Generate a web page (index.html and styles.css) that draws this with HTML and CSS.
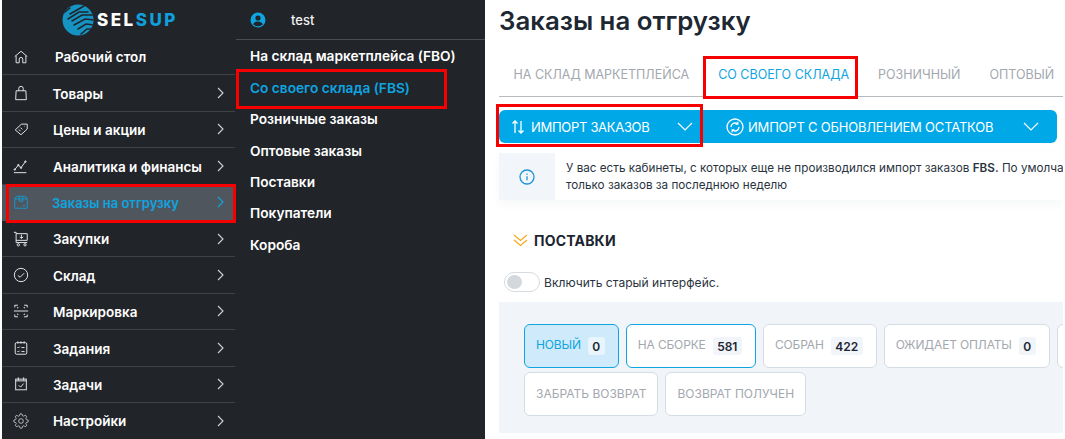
FILE: index.html
```html
<!DOCTYPE html>
<html lang="ru">
<head>
<meta charset="utf-8">
<title>Заказы на отгрузку</title>
<link rel="stylesheet" href="styles.css">
</head>
<body>
<div class="page">
  <nav class="sidebar">
    <div class="logo">
      <svg class="logo-globe" viewBox="0 0 32 34" width="32" height="34">
        <defs><clipPath id="gl"><circle cx="16" cy="17" r="15.5"/></clipPath></defs>
        <circle cx="16" cy="17" r="15.5" fill="#1594c4"/>
        <g clip-path="url(#gl)" fill="none" stroke="#212429" stroke-width="1.5" stroke-linecap="round">
          <path d="M8 11 L22 3"/><path d="M6 16 L17 9 L26 9"/><path d="M10 18 L20 12 L31 12"/><path d="M12 22 L23 16 L32 17"/><path d="M16 26 L24 21 L32 22"/><path d="M19 31 L25 26 L32 26"/><path d="M-1 12 L8 5"/>
        </g>
      </svg>
      <span class="logo-text">SEL<span class="logo-accent">SUP</span></span>
    </div>
    <ul class="menu">
      <li class="menu-item">
        <svg class="ic" viewBox="0 0 18 18"><path d="M2 8.500 9 2.500l7 6M3.500 7.500V15.500h3.500v-4a2 2 0 0 1 4 0v4h3.500V7.500"/></svg>
        <span class="menu-label label-home label-flat">Рабочий стол</span>
      </li>
      <li class="menu-item">
        <svg class="ic" viewBox="0 0 18 18"><path d="M3.500 6.500h11l.5 10H3zM6.500 6.500V4a2.500 2.500 0 0 1 5 0v2.500"/></svg>
        <span class="menu-label label-goods">Товары</span>
        <svg class="chev" viewBox="0 0 7 12"><path d="M1 1l5 5-5 5"/></svg>
      </li>
      <li class="menu-item">
        <svg class="ic" viewBox="0 0 18 18"><path d="M9.500 3.500H16V9l-7 6.500L2.500 10zM13 6h.5M6.500 9.500l2 2M8.500 7.500l2 2"/></svg>
        <span class="menu-label">Цены и акции</span>
        <svg class="chev" viewBox="0 0 7 12"><path d="M1 1l5 5-5 5"/></svg>
      </li>
      <li class="menu-item">
        <svg class="ic" viewBox="0 0 18 18"><path d="M1 16.500h14M2 13l4-5 3 3 5-7"/><circle cx="2" cy="13" r=".8"/><circle cx="6" cy="8" r=".8"/><circle cx="9" cy="11" r=".8"/><circle cx="14" cy="4" r=".8"/></svg>
        <span class="menu-label label-low">Аналитика и финансы</span>
        <svg class="chev" viewBox="0 0 7 12"><path d="M1 1l5 5-5 5"/></svg>
      </li>
      <li class="menu-item is-active">
        <svg class="ic" viewBox="0 0 18 18"><path d="M4 2.500h10l2 3v10.500H2V5.500zM2 5.500h14M7 2.500v6M11 2.500v6M7 8h4M11 13h2.500"/></svg>
        <span class="menu-label">Заказы на отгрузку</span>
        <svg class="chev" viewBox="0 0 7 12"><path d="M1 1l5 5-5 5"/></svg>
      </li>
      <li class="menu-item">
        <svg class="ic" viewBox="0 0 18 18"><path d="M1 1.500h2.500V13H16M3.500 3h12.500v7.500H3.500M9.500 4v4M7.500 6.500l2 2 2-2"/><circle cx="6" cy="15.500" r="1.300"/><circle cx="13.500" cy="15.500" r="1.300"/></svg>
        <span class="menu-label label-flat">Закупки</span>
        <svg class="chev" viewBox="0 0 7 12"><path d="M1 1l5 5-5 5"/></svg>
      </li>
      <li class="menu-item">
        <svg class="ic" viewBox="0 0 18 18"><circle cx="9" cy="9" r="7.500"/><path d="M5.500 9.500l2.500 2 4.500-4.500"/></svg>
        <span class="menu-label">Склад</span>
        <svg class="chev" viewBox="0 0 7 12"><path d="M1 1l5 5-5 5"/></svg>
      </li>
      <li class="menu-item">
        <svg class="ic" viewBox="0 0 18 18"><path d="M2 5V2.500h3.500M12.500 2.500H16V5M2 13v2.500h3.500M12.500 15.500H16V13M1 9h16M5 6V5h1M12 5h1v1M5 12v1h1M13 12v1h-1"/></svg>
        <span class="menu-label">Маркировка</span>
        <svg class="chev" viewBox="0 0 7 12"><path d="M1 1l5 5-5 5"/></svg>
      </li>
      <li class="menu-item">
        <svg class="ic" viewBox="0 0 18 18"><rect x="2.500" y="3" width="13" height="13" rx="1.500"/><path d="M5.500 1.500V4M9 1.500V4M12.500 1.500V4M5 8l1 1 1.500-1.500M9.500 8.500H13M5 12.500l1 1 1.500-1.500M9.500 13H13"/></svg>
        <span class="menu-label label-low">Задания</span>
        <svg class="chev" viewBox="0 0 7 12"><path d="M1 1l5 5-5 5"/></svg>
      </li>
      <li class="menu-item">
        <svg class="ic" viewBox="0 0 18 18"><rect x="3" y="3.500" width="12" height="12"/><path d="M6 1.500V5M12 1.500V5M3 5.500h12M6.500 10.500l2 2 3.500-4"/></svg>
        <span class="menu-label">Задачи</span>
        <svg class="chev" viewBox="0 0 7 12"><path d="M1 1l5 5-5 5"/></svg>
      </li>
      <li class="menu-item">
        <svg class="ic" viewBox="0 0 24 24"><circle cx="12" cy="12" r="3.500"/><path d="M19.400 15a1.650 1.650 0 0 0 .33 1.820l.06.06a2 2 0 0 1 0 2.830 2 2 0 0 1-2.830 0l-.06-.06a1.650 1.650 0 0 0-1.820-.33 1.650 1.650 0 0 0-1 1.510V21a2 2 0 0 1-2 2 2 2 0 0 1-2-2v-.09A1.650 1.650 0 0 0 9 19.400a1.650 1.650 0 0 0-1.820.33l-.06.06a2 2 0 0 1-2.830 0 2 2 0 0 1 0-2.830l.06-.06a1.650 1.650 0 0 0 .33-1.820 1.650 1.650 0 0 0-1.510-1H3a2 2 0 0 1-2-2 2 2 0 0 1 2-2h.09A1.650 1.650 0 0 0 4.600 9a1.650 1.650 0 0 0-.33-1.820l-.06-.06a2 2 0 0 1 0-2.830 2 2 0 0 1 2.830 0l.06.06a1.650 1.650 0 0 0 1.820.33H9a1.650 1.650 0 0 0 1-1.510V3a2 2 0 0 1 2-2 2 2 0 0 1 2 2v.09a1.650 1.650 0 0 0 1 1.510 1.650 1.650 0 0 0 1.820-.33l.06-.06a2 2 0 0 1 2.830 0 2 2 0 0 1 0 2.830l-.06.06a1.650 1.650 0 0 0-.33 1.820V9a1.650 1.650 0 0 0 1.510 1H21a2 2 0 0 1 2 2 2 2 0 0 1-2 2h-.09a1.650 1.650 0 0 0-1.510 1z"/></svg>
        <span class="menu-label label-flat">Настройки</span>
        <svg class="chev" viewBox="0 0 7 12"><path d="M1 1l5 5-5 5"/></svg>
      </li>
    </ul>
  </nav>

  <aside class="subnav">
    <div class="user">
      <svg class="user-icon" viewBox="0 0 16 16" width="16" height="16"><circle cx="8" cy="8" r="7.500" fill="#0ea5e0"/><circle cx="8" cy="6" r="2.600" fill="#212429"/><path d="M3.200 12.300c.8-2 2.800-2.800 4.800-2.800s4 .8 4.800 2.800A6.300 6.300 0 0 1 8 14.300a6.300 6.300 0 0 1-4.800-2z" fill="#212429"/></svg>
      <span class="user-name">test</span>
    </div>
    <ul class="sublist">
      <li class="subitem">На склад маркетплейса (FBO)</li>
      <li class="subitem is-current">Со своего склада (FBS)</li>
      <li class="subitem">Розничные заказы</li>
      <li class="subitem">Оптовые заказы</li>
      <li class="subitem">Поставки</li>
      <li class="subitem">Покупатели</li>
      <li class="subitem">Короба</li>
    </ul>
  </aside>

  <main class="content">
    <h1 class="title">Заказы на отгрузку</h1>
    <div class="tabs">
      <span class="tab">НА СКЛАД МАРКЕТПЛЕЙСА</span>
      <span class="tab is-selected">СО СВОЕГО СКЛАДА</span>
      <span class="tab">РОЗНИЧНЫЙ</span>
      <span class="tab">ОПТОВЫЙ</span>
    </div>
    <div class="actions">
      <div class="action action-import">
        <svg class="action-icon" viewBox="0 0 14 16" width="14" height="16"><path d="M4 14V2M1.500 4.500 4 2l2.500 2.500M10 2v12M7.500 11.500 10 14l2.500-2.500"/></svg>
        <span class="action-label">ИМПОРТ ЗАКАЗОВ</span>
        <svg class="action-chev" viewBox="0 0 16 9" width="16" height="9"><path d="M1 1l7 7 7-7"/></svg>
      </div>
      <div class="action action-sync">
        <svg class="action-icon" viewBox="0 0 18 18" width="18" height="18"><circle cx="9" cy="9" r="8"/><path d="M5 9a4 4 0 0 1 6.500-3.100M13 9a4 4 0 0 1-6.500 3.100M11.800 3.800v2.400H9.500M6.200 14.200v-2.400h2.300"/></svg>
        <span class="action-label">ИМПОРТ С ОБНОВЛЕНИЕМ ОСТАТКОВ</span>
        <svg class="action-chev" viewBox="0 0 16 9" width="16" height="9"><path d="M1 1l7 7 7-7"/></svg>
      </div>
    </div>
    <div class="notice">
      <div class="notice-icon">
        <svg viewBox="0 0 16 16" width="16" height="16"><circle cx="8" cy="8" r="7"/><path d="M8 7.200v4M8 4.500v1.200"/></svg>
      </div>
      <p class="notice-text">У вас есть кабинеты, с которых еще не производился импорт заказов <b>FBS.</b> По умолчанию будет выполнен импорт<br>только заказов за последнюю неделю</p>
    </div>
    <div class="section-head">
      <svg viewBox="0 0 15 14" width="15" height="14"><path d="M1 2l6.500 5.500L14 2M1 7l6.500 5.500L14 7"/></svg>
      <span class="section-title">ПОСТАВКИ</span>
    </div>
    <div class="switch-row">
      <span class="switch"><span class="switch-knob"></span></span>
      <span class="switch-label">Включить старый интерфейс.</span>
    </div>
    <div class="panel">
      <div class="chips">
        <span class="chip chip-new">НОВЫЙ<span class="count count-new">0</span></span>
        <span class="chip chip-on">НА СБОРКЕ<span class="count">581</span></span>
        <span class="chip">СОБРАН<span class="count">422</span></span>
        <span class="chip">ОЖИДАЕТ ОПЛАТЫ<span class="count">0</span></span>
        <span class="chip chip-cut"></span>
      </div>
      <div class="chips">
        <span class="chip chip-plain">ЗАБРАТЬ ВОЗВРАТ</span>
        <span class="chip chip-plain">ВОЗВРАТ ПОЛУЧЕН</span>
      </div>
    </div>
  </main>

  <div class="mark mark-nav"></div>
  <div class="mark mark-sub"></div>
  <div class="mark mark-tab"></div>
  <div class="mark mark-btn"></div>
</div>
</body>
</html>
```

FILE: styles.css
```css
* { box-sizing: border-box; }
html, body { margin: 0; padding: 0; background: #fff; }
ul { list-style: none; margin: 0; padding: 0; }
.page {
  position: relative;
  display: flex;
  width: 1065px;
  height: 439px;
  overflow: hidden;
  padding-left: 2px;
  font-family: Inter, "Liberation Sans", sans-serif;
  background: #fff;
}
.sidebar { width: 233px; flex: none; background: #212429; color: #fff; }
.logo { height: 39px; display: flex; align-items: center; padding-left: 60px; gap: 3px; }
.logo-globe { flex: none; }
.logo-text { font-weight: 800; font-size: 17px; letter-spacing: 2.500px; color: #fff; }
.logo-accent { color: #0f9fdc; }
.menu-item {
  height: 36.4px;
  display: flex;
  align-items: center;
  padding-left: 11px;
  border-bottom: 1px solid #3f4247;
}
.menu-item:last-child { border-bottom: 0; }
.ic {
  width: 16px;
  height: 16px;
  flex: none;
  fill: none;
  stroke: #e4e6e8;
  stroke-width: 1.100;
}
.menu-label { margin-left: 24px; padding-top: 1px; font-size: 13.500px; font-weight: 600; white-space: nowrap; flex: 1; }
.label-flat { padding-top: 0; }
.label-low { padding-top: 2px; }
.label-home { margin-left: 26px; }
.label-goods { margin-left: 23.500px; }
.chev { width: 7px; height: 12px; flex: none; margin-right: 11px; fill: none; stroke: #d0d3d6; stroke-width: 1.100; }
.is-active { background: #50565e; border-bottom-color: #50565e; color: #0ea5e0; }
.is-active .ic { stroke: #0ea5e0; stroke-width: .9; }
.is-active .chev { stroke: #0ea5e0; }
.is-active .menu-label { font-size: 13px; margin-left: 23px; }

.subnav { width: 250px; flex: none; background: #212429; color: #fff; }
.user { height: 40px; display: flex; align-items: center; padding-left: 14px; border-bottom: 1px solid #4a4d52; margin-left: 1px; }
.user-name { margin-left: 25px; font-size: 13px; font-weight: 500; color: #f1f1f1; }
.sublist { padding: .7px 0 0 15px; }
.subitem { height: 31.400px; display: flex; align-items: center; font-size: 13.700px; font-weight: 600; white-space: nowrap; }
.is-current { color: #0ea5e0; }

.content { width: 578px; flex: none; padding-left: 14px; overflow: hidden; color: #1e2a36; }
.title { margin: 0; height: 44px; padding-top: 4px; font-size: 25.800px; line-height: 34px; font-weight: 600; color: #1d2833; white-space: nowrap; }
.tabs { display: flex; width: 564px; height: 53px; border-bottom: 1px solid #b6bbc0; align-items: center; padding-top: 8px; }
.tab { font-size: 12.500px; color: #a3a8ae; white-space: nowrap; padding: 0 14.500px; flex: none; }
.is-selected { color: #0ea5e0; }
.actions { display: flex; width: 558px; height: 33px; margin-top: 13px; background: #00a8e8; border-radius: 6px; color: #fff; }
.action { display: flex; align-items: center; height: 100%; flex: none; }
.action-import { width: 204px; padding-left: 12px; }
.action-sync { width: 354px; padding-left: 23px; }
.action-icon { flex: none; fill: none; stroke: #fff; stroke-width: 1.300; }
.action-label { margin-left: 6px; font-size: 13px; letter-spacing: -.3px; white-space: nowrap; flex: 1; }
.action-sync .action-label { margin-left: 4px; letter-spacing: -.2px; }
.action-chev { flex: none; fill: none; stroke: #fff; stroke-width: 1.200; margin-right: 10px; }
.action-sync .action-chev { margin-right: 18px; }
.notice { display: flex; width: 564px; height: 47px; margin-top: 10px; align-items: center; background: #fff; box-shadow: 0 4px 10px rgba(30, 50, 80, .04); overflow: hidden; }
.notice-icon { width: 56px; height: 100%; flex: none; background: #f2f6fb; display: flex; align-items: center; justify-content: center; }
.notice-icon svg { fill: none; stroke: #1e93d6; stroke-width: 1.300; }
.notice-text { margin: 1px 0 0 11px; font-size: 11.700px; line-height: 17px; white-space: nowrap; color: #2a3440; }
.notice-text b { font-weight: 600; }
.section-head { display: flex; align-items: center; height: 20px; margin-top: 30px; padding-left: 14px; gap: 6px; }
.section-head svg { fill: none; stroke: #f4a81c; stroke-width: 1.200; flex: none; }
.section-title { font-size: 14px; font-weight: 700; color: #1b2530; letter-spacing: .2px; }
.switch-row { display: flex; align-items: center; height: 20px; margin-top: 22px; padding-left: 5px; gap: 4px; }
.switch { width: 36px; height: 20px; border: 1px solid #d5dbe0; border-radius: 10px; background: #fff; padding: 2px; flex: none; display: block; }
.switch-knob { display: block; width: 15px; height: 14px; border-radius: 50%; background: #d3d8dc; }
.switch-label { font-size: 12.100px; color: #2a3440; white-space: nowrap; }
.panel { width: 564px; height: 131px; margin-top: 10px; padding: 22px 0 0 25px; background: #f1f4f9; overflow: hidden; }
.chips { display: flex; gap: 7px; margin-bottom: 4px; }
.chip { display: flex; align-items: center; height: 44px; padding: 0 13px 3px 11px; border: 1px solid #d6dde2; border-radius: 6px; background: #fff; font-size: 12px; letter-spacing: -.15px; color: #a3a8ae; white-space: nowrap; flex: none; }
.chip-new { background: #cfeafa; border-color: #0ea5e0; color: #0ea5e0; }
.chip-on { border-color: #0ea5e0; }
.chip-cut { width: 40px; }
.chip-plain { padding: 0 11px 1px; letter-spacing: 0; }
.count { margin: 3px 0 0 7px; min-width: 16px; height: 18px; padding: 0 4.500px; display: flex; align-items: center; justify-content: center; border-radius: 3px; background: #f1f4f9; font-size: 12px; letter-spacing: 0; font-weight: 600; color: #1c2733; }
.count-new { background: #e9f5fc; }

.mark { position: absolute; border: 3px solid #f70000; pointer-events: none; }
.mark-nav { left: 6px; top: 184px; width: 230px; height: 39px; }
.mark-sub { left: 236px; top: 69px; width: 211px; height: 40px; }
.mark-tab { left: 703px; top: 56px; width: 155px; height: 43px; }
.mark-btn { left: 496px; top: 104px; width: 207px; height: 43px; }
```
